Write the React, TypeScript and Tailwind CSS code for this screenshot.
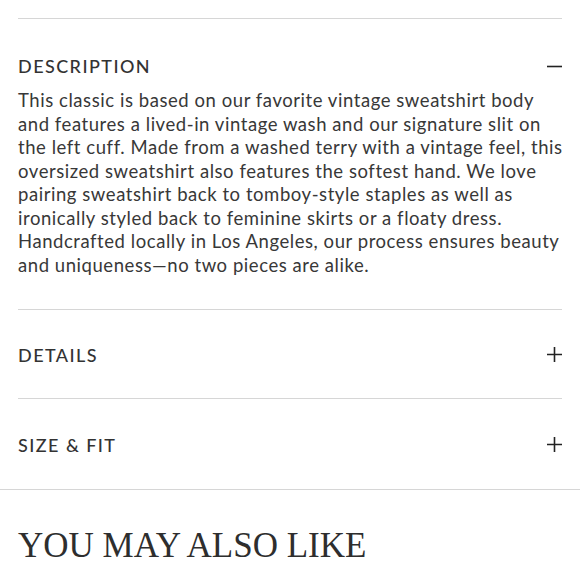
import React from 'react';

const sections = [
  { title: 'DETAILS', h: 'h-[88px]' },
  { title: 'SIZE & FIT', h: 'h-[90px]' },
];

const bodyLines = [
  'This classic is based on our favorite vintage sweatshirt body',
  'and features a lived-in vintage wash and our signature slit on',
  'the left cuff. Made from a washed terry with a vintage feel, this',
  'oversized sweatshirt also features the softest hand. We love',
  'pairing sweatshirt back to tomboy-style staples as well as',
  'ironically styled back to feminine skirts or a floaty dress.',
  'Handcrafted locally in Los Angeles, our process ensures beauty',
  'and uniqueness—no two pieces are alike.',
];

const Minus = () => (
  <svg width="15" height="15" viewBox="0 0 15 15" className="text-[#222]">
    <path d="M0 7.5H15" stroke="currentColor" strokeWidth="1.6" />
  </svg>
);

const Plus = () => (
  <svg width="15" height="15" viewBox="0 0 15 15" className="text-[#222]">
    <path d="M0 7.5H15M7.5 0V15" stroke="currentColor" strokeWidth="1.6" />
  </svg>
);

export default function App() {
  return (
    <div className="w-[580px] h-[580px] overflow-hidden bg-white text-[#333]">
      <div className="px-[18px] pt-[18px]">
        {/* Description (open) */}
        <div className="border-t border-[#d6d6d6]">
          <div className="flex items-center justify-between pt-[35px]">
            <h3 className="font-['Lato',sans-serif] text-[18px] font-medium tracking-[0.08em] leading-[24px]">
              DESCRIPTION
            </h3>
            <Minus />
          </div>
          <p className="mt-[11px] font-['Lato',sans-serif] text-[18.5px] tracking-[0.03em] leading-[23.5px] text-[#383838] pb-[32px]">
            {bodyLines.map((l, i) => (
              <span key={i} className="block whitespace-nowrap">
                {l}
              </span>
            ))}
          </p>
        </div>
        {sections.map((s) => (
          <div key={s.title} className="border-t border-[#d6d6d6]">
            <div className={`flex items-center justify-between ${s.h}`}>
              <h3 className="font-['Lato',sans-serif] text-[18px] font-medium tracking-[0.08em] leading-[24px] pt-[2px]">
                {s.title}
              </h3>
              <Plus />
            </div>
          </div>
        ))}
      </div>
      <div className="border-t border-[#d6d6d6]">
        <h2 className="px-[18px] pt-[35px] font-['Liberation_Serif',serif] text-[35px] leading-[42px] text-[#2e2e2e]">
          YOU MAY ALSO LIKE
        </h2>
      </div>
    </div>
  );
}
